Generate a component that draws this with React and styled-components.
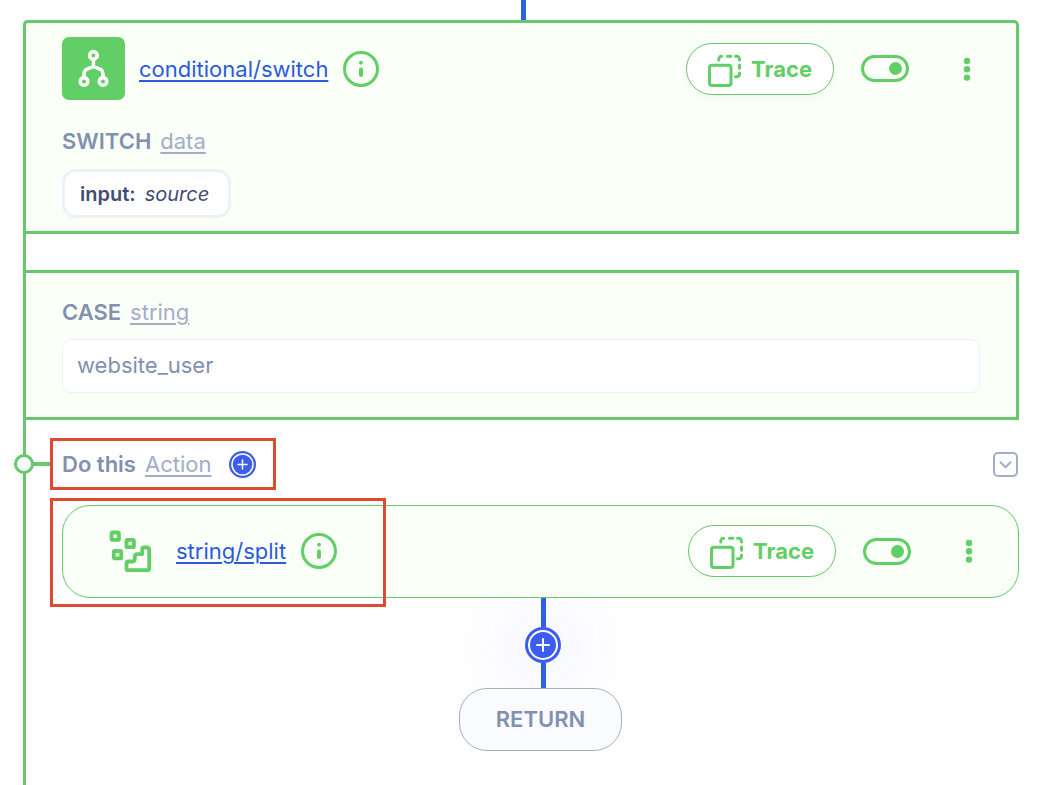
import React from "react";
import styled, { createGlobalStyle, ThemeProvider } from "styled-components";

const theme = {
  green: "#62ce66",
  greenLine: "#66c86b",
  greenTint: "#fafff7",
  blue: "#3d5cf2",
  blueLine: "#2d61e6",
  link: "#2b5bdc",
  label: "#8390b0",
  hint: "#a3adc8",
  ink: "#414c75",
  red: "#db4a31",
};

const GlobalStyle = createGlobalStyle`
  *, *::before, *::after { box-sizing: border-box; }
  body {
    margin: 0;
    background: #fefeff;
    font-family: Inter, "Liberation Sans", sans-serif;
    font-size: 22px;
    line-height: 28px;
  }
  button, input { font: inherit; }
  svg { display: block; flex: none; }
`;

const Page = styled.main`
  display: flex;
  flex-direction: column;
  min-height: 100vh;
  padding: 0 43px 0 23px;
`;

const Line = styled.div`
  width: 5px;
  height: ${(p) => p.$length}px;
  background: ${(p) => p.theme.blueLine};
`;

const Connector = styled.div`
  display: flex;
  flex-direction: column;
  align-items: center;
  padding-left: 5px;
`;

const Branch = styled.section`
  flex: 1;
  border-left: 3px solid ${(p) => p.theme.greenLine};
  border-top-left-radius: 5px;
`;

const Panel = styled.section`
  margin: 0 0 ${(p) => p.$after}px -3px;
  padding: ${(p) => p.$pad};
  border: 3px solid ${(p) => p.theme.greenLine};
  border-radius: ${(p) => (p.$first ? "5px 5px 0 0" : "0")};
  background: ${(p) => p.theme.greenTint};
`;

const StepHeader = styled.header`
  display: flex;
  align-items: center;
  margin-bottom: ${(p) => p.$after || 0}px;
`;

const IconTile = styled.span`
  border-radius: 7px;
  background: ${(p) => p.theme.green};
`;

const StepLink = styled.a`
  margin: 0 15px 0 ${(p) => p.$before}px;
  color: ${(p) => p.theme.link};
  text-decoration: underline;
  text-decoration-thickness: 2px;
  text-underline-offset: 3px;
`;

const IconButton = styled.button`
  display: flex;
  align-items: center;
  justify-content: center;
  padding: 0;
  border: 0;
  background: none;
  cursor: pointer;
`;

const Actions = styled.div`
  display: flex;
  align-items: center;
  margin-left: auto;
`;

const TraceButton = styled.button`
  display: flex;
  align-items: center;
  gap: 10px;
  height: 52px;
  padding: 0 21px;
  border: 1px solid ${(p) => p.theme.greenLine};
  border-radius: 26px;
  background: #fff;
  color: ${(p) => p.theme.green};
  font-weight: 700;
  box-shadow: 0 4px 10px rgba(60, 90, 60, 0.03);
  cursor: pointer;
`;

const Switch = styled.input`
  appearance: none;
  display: flex;
  align-items: center;
  justify-content: ${(p) => (p.checked ? "flex-end" : "flex-start")};
  width: 48px;
  height: 27px;
  margin: 0 45px 0 27px;
  padding: 0 4px;
  border: 3px solid ${(p) => p.theme.green};
  border-radius: 14px;
  cursor: pointer;

  &::before {
    content: "";
    width: 13px;
    height: 13px;
    border-radius: 50%;
    background: ${(p) => p.theme.green};
  }
`;

const FieldLabel = styled.div`
  display: flex;
  gap: 9px;
  margin-bottom: ${(p) => p.$after || 0}px;
  color: ${(p) => p.theme.label};
`;

const Name = styled.label`
  font-weight: 600;
`;

const TypeLink = styled.a`
  color: ${(p) => p.theme.hint};
  text-decoration: underline;
  text-decoration-thickness: 2px;
  text-underline-offset: 3px;
`;

const Chip = styled.button`
  display: inline-flex;
  align-items: center;
  gap: 9px;
  height: 49px;
  padding: 0 19px 0 15px;
  border: 3px solid #f0f1f5;
  border-radius: 14px;
  background: #fff;
  color: ${(p) => p.theme.ink};
  font-size: 20px;
  vertical-align: top;

  b { font-weight: 600; }
`;

const TextField = styled.input`
  display: block;
  width: 100%;
  height: 54px;
  padding: 0 14px 2px;
  border: 1px solid #eff1f4;
  border-radius: 9px;
  background: #fff;
  color: ${(p) => p.theme.label};
`;

const ActionRow = styled.div`
  position: relative;
  display: flex;
  align-items: center;
  height: 52px;
  margin-bottom: 15px;
  padding-right: 1px;

  &::before {
    content: "";
    width: 24px;
    height: 4px;
    background: ${(p) => p.theme.greenLine};
  }
`;

const RailNode = styled.span`
  position: absolute;
  left: -12px;
  width: 20px;
  height: 20px;
  border: 3px solid ${(p) => p.theme.greenLine};
  border-radius: 50%;
  background: #fff;
`;

const HighlightedLabel = styled.div`
  display: flex;
  align-items: center;
  gap: 18px;
  height: 100%;
  padding: 0 17px 0 9px;
  border: 3px solid ${(p) => p.theme.red};
`;

const CollapseButton = styled(IconButton)`
  width: 25px;
  height: 25px;
  margin-left: auto;
  border: 2px solid ${(p) => p.theme.hint};
  border-radius: 5px;
`;

const Steps = styled.div`
  display: flex;
  flex-direction: column;
  padding-left: 36px;
`;

const Card = styled.article`
  position: relative;
  padding: 19px 36px 20px 46px;
  border: 1px solid ${(p) => p.theme.greenLine};
  border-radius: 28px;
  background: ${(p) => p.theme.greenTint};
`;

const Highlight = styled.span`
  position: absolute;
  top: -8px;
  left: -13px;
  bottom: -10px;
  width: 336px;
  border: 3px solid ${(p) => p.theme.red};
  pointer-events: none;
`;

const AddButton = styled(IconButton)`
  border-radius: 50%;
  box-shadow: ${(p) => (p.$glow ? "0 4px 60px 16px rgba(80, 105, 240, 0.08)" : "none")};
`;

const ReturnButton = styled.button`
  position: relative;
  align-self: center;
  height: 63px;
  padding: 0 36px 1px;
  border: 1px solid ${(p) => p.theme.hint};
  border-radius: 28px;
  background: #fafbfe;
  color: ${(p) => p.theme.label};
  font-weight: 600;
`;

const BranchIcon = () => (
  <svg width="63" height="63" viewBox="0 0 63 63" fill="none" stroke="#fff" strokeWidth="3.6" strokeLinecap="round" strokeLinejoin="round" aria-hidden="true">
    <circle cx="31.4" cy="18.4" r="3.8" />
    <circle cx="22" cy="44.4" r="3.8" />
    <circle cx="41" cy="44.4" r="3.8" />
    <path d="M31.4 22.5v7M22 40.5v-3.3c0-3.3 1.8-5.2 4.8-5.8l4.6-2 4.8 2c3 .6 4.8 2.5 4.8 5.8v3.3" />
  </svg>
);

const SplitIcon = () => (
  <svg width="43" height="43" viewBox="0 0 43 43" fill="none" stroke={theme.green} strokeWidth="3.8" strokeLinejoin="round" aria-hidden="true">
    <rect x="2.5" y="2.5" width="7.4" height="7.4" rx="1" />
    <rect x="17.5" y="9.8" width="7.4" height="7.4" rx="1" />
    <rect x="4.8" y="21" width="7.4" height="7.4" rx="1" />
    <path d="M40.2 19.3a1.8 1.8 0 0 0-1.8-1.8h-3.2a2 2 0 0 0-2 2v4.6h-5a2.4 2.4 0 0 0-2.4 2.4v2.6a2.4 2.4 0 0 1-2.4 2.4h-3.9a2 2 0 0 0-2 2v4.7a2 2 0 0 0 2 2h18.7a2 2 0 0 0 2-2z" />
  </svg>
);

const InfoIcon = () => (
  <svg width="36" height="36" viewBox="0 0 36 36" fill="none" stroke={theme.green} strokeLinecap="round" aria-hidden="true">
    <circle cx="18" cy="18" r="16.5" strokeWidth="3" />
    <path d="M18 18.5v5.5" strokeWidth="4" />
    <circle cx="18" cy="11.7" r="1.9" fill={theme.green} stroke="none" />
  </svg>
);

const TraceIcon = () => (
  <svg width="33" height="36" viewBox="0 0 33 36" fill="none" stroke={theme.green} strokeWidth="3" strokeLinecap="round" aria-hidden="true">
    <rect x="1.5" y="14.2" width="21.5" height="20.3" rx="2.5" />
    <path d="M10.8 9V8a2.8 2.8 0 0 1 2.8-2.8M19.5 5.2h3.4M27.6 5.2h1.1a2.8 2.8 0 0 1 2.8 2.8v1.1M31.5 14v3.2M31.5 22v1a2.8 2.8 0 0 1-2.8 2.8h-1.2" />
  </svg>
);

const DotsIcon = () => (
  <svg width="26" height="26" viewBox="0 0 26 26" fill={theme.green} aria-hidden="true">
    <circle cx="13" cy="5" r="3.2" />
    <circle cx="13" cy="13.3" r="3.2" />
    <circle cx="13" cy="21.6" r="3.2" />
  </svg>
);

const PlusIcon = ({ size, ring, arm }) => (
  <svg width={size} height={size} viewBox="0 0 36 36" fill="none" stroke="#fff" strokeWidth="2" aria-hidden="true">
    <circle cx="18" cy="18" r="18" fill={theme.blue} stroke="none" />
    <circle cx="18" cy="18" r={ring} />
    <path d={`M18 ${18 - arm}v${2 * arm}M${18 - arm} 18h${2 * arm}`} strokeLinecap="round" />
  </svg>
);

const ChevronIcon = () => (
  <svg width="15" height="15" viewBox="0 0 15 15" fill="none" stroke={theme.hint} strokeWidth="2" strokeLinecap="round" strokeLinejoin="round" aria-hidden="true">
    <path d="M2.5 5.3l5 5 5-5" />
  </svg>
);

function StepActions({ step }) {
  const [enabled, setEnabled] = React.useState(true);
  return (
    <Actions>
      <TraceButton type="button">
        <TraceIcon />
        Trace
      </TraceButton>
      <Switch
        type="checkbox"
        role="switch"
        aria-label={`Enable ${step}`}
        checked={enabled}
        onChange={(e) => setEnabled(e.target.checked)}
      />
      <IconButton type="button" aria-label={`${step} menu`}>
        <DotsIcon />
      </IconButton>
    </Actions>
  );
}

export default function App() {
  return (
    <ThemeProvider theme={theme}>
      <GlobalStyle />
      <Page>
        <Connector>
          <Line $length={20} />
        </Connector>
        <Branch>
          <Panel $first $after={36} $pad="14px 36px 13px">
            <StepHeader $after={27}>
              <IconTile>
                <BranchIcon />
              </IconTile>
              <StepLink href="#switch" $before={14}>conditional/switch</StepLink>
              <IconButton type="button" aria-label="About conditional/switch">
                <InfoIcon />
              </IconButton>
              <StepActions step="conditional/switch" />
            </StepHeader>
            <FieldLabel $after={14}>
              <Name htmlFor="switch-data">SWITCH</Name>
              <TypeLink href="#data">data</TypeLink>
            </FieldLabel>
            <Chip type="button" id="switch-data">
              <b>input:</b>
              <i>source</i>
            </Chip>
          </Panel>

          <Panel $after={18} $pad="25px 36px 24px">
            <FieldLabel $after={13}>
              <Name htmlFor="case-value">CASE</Name>
              <TypeLink href="#string">string</TypeLink>
            </FieldLabel>
            <TextField id="case-value" type="text" defaultValue="website_user" />
          </Panel>

          <ActionRow>
            <RailNode />
            <HighlightedLabel>
              <FieldLabel>
                <Name as="span">Do this</Name>
                <TypeLink href="#action">Action</TypeLink>
              </FieldLabel>
              <AddButton type="button" aria-label="Add action">
                <PlusIcon size={27} ring={14} arm={6} />
              </AddButton>
            </HighlightedLabel>
            <CollapseButton type="button" aria-label="Collapse">
              <ChevronIcon />
            </CollapseButton>
          </ActionRow>

          <Steps>
            <Card>
              <StepHeader>
                <SplitIcon />
                <StepLink href="#split" $before={24}>string/split</StepLink>
                <IconButton type="button" aria-label="About string/split">
                  <InfoIcon />
                </IconButton>
                <StepActions step="string/split" />
              </StepHeader>
              <Highlight />
            </Card>
            <Connector>
              <Line $length={29} />
              <AddButton type="button" aria-label="Add step" $glow>
                <PlusIcon size={36} ring={14} arm={6} />
              </AddButton>
              <Line $length={25} />
            </Connector>
            <ReturnButton type="button">RETURN</ReturnButton>
          </Steps>
        </Branch>
      </Page>
    </ThemeProvider>
  );
}
